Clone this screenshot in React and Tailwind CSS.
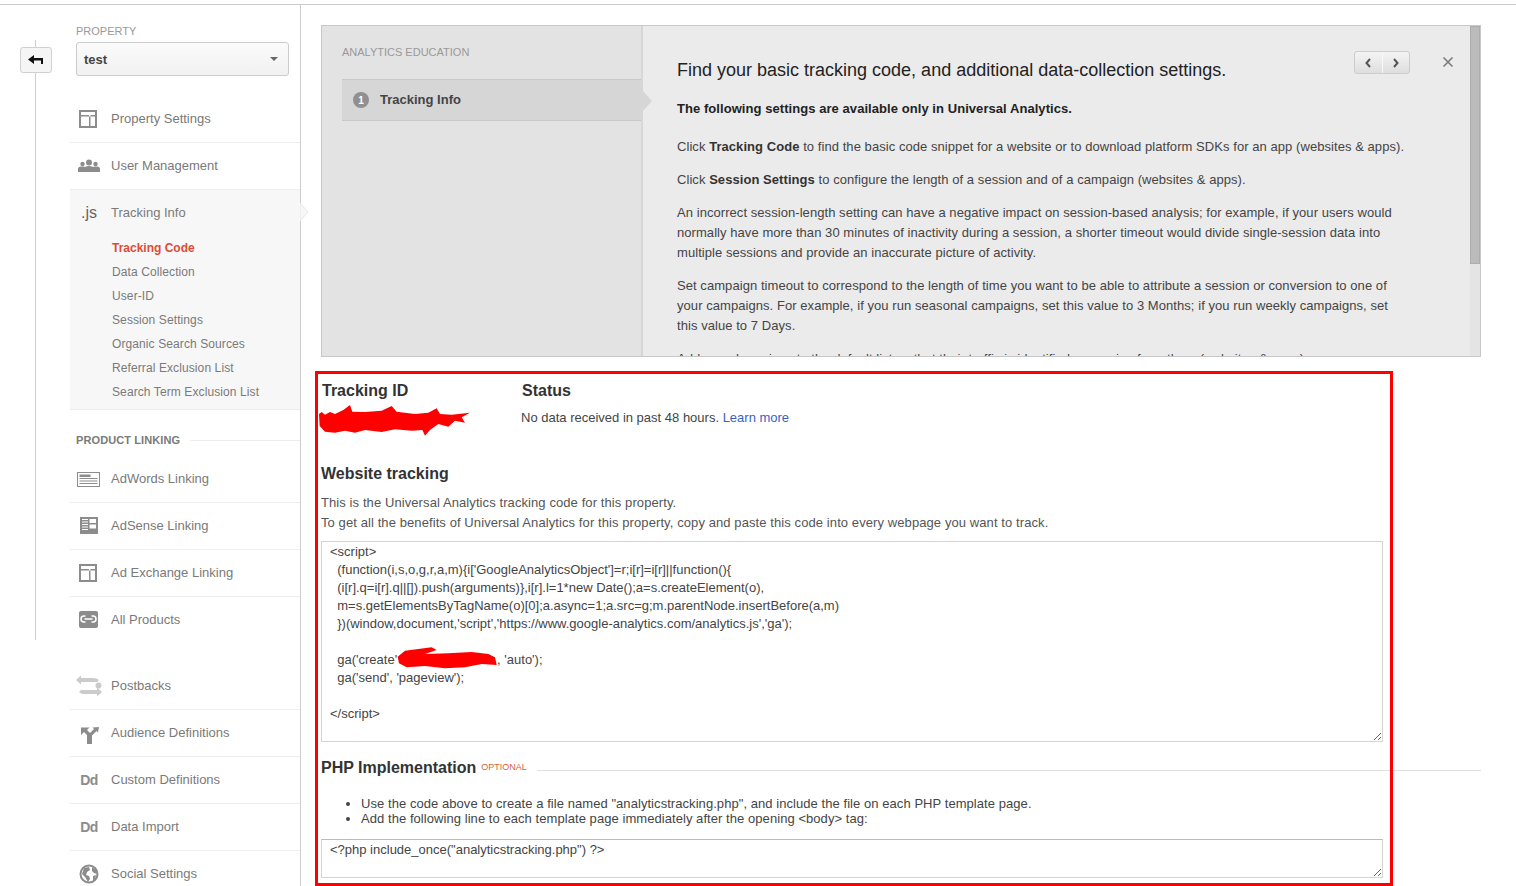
const Ic = ({ children }) => (
  <svg width="28" height="24" viewBox="0 0 28 24" className="shrink-0" fill="#8c8c8c">{children}</svg>
);

const PanelIcon = () => (
  <Ic>
    <path fillRule="evenodd" d="M4 3h18v18H4zM6 5v14h14V5zM6 8h14v1.500H6zM14 8h1.500v11H14z" />
  </Ic>
);

const UsersIcon = () => (
  <Ic>
    <circle cx="14" cy="8.500" r="3" />
    <circle cx="7.500" cy="10" r="2.200" />
    <circle cx="20.500" cy="10" r="2.200" />
    <path d="M3 18v-3q0-2.500 3-2.500h2.500q1 0 1.500.5 1.500-1 4-1t4 1q.5-.5 1.500-.5H22q3 0 3 2.500v3z" />
  </Ic>
);

const AdWordsIcon = () => (
  <Ic>
    <path fillRule="evenodd" d="M2 5h23v15H2zM3 6v13h21V6z" />
    <path d="M4.500 7.500h11v2.500h-11zM4.500 11h18v1h-18zM4.500 13.500h18v1h-18zM4.500 16h18v1h-18z" />
  </Ic>
);

const AdSenseIcon = () => (
  <Ic>
    <path fillRule="evenodd" d="M5 3h18v17H5zM7 5v1h6V5zM7 7.500v1h6v-1zM7 10v1h6v-1zM7 12.500v1h6v-1zM7 15v1h6v-1zM14.500 5v4h6.500V5zM14.500 10.500v4h6.500v-4z" />
  </Ic>
);

const LinkIcon = () => (
  <Ic>
    <rect x="4" y="3" width="19" height="17" rx="2" />
    <path d="M10.500 8H9a3 3 0 0 0 0 6h1.500M16.500 8H18a3 3 0 0 1 0 6h-1.500M9.500 11h8" stroke="#fff" strokeWidth="1.500" fill="none" />
  </Ic>
);

const PostbackIcon = () => (
  <Ic>
    <path fill="#cbcbcb" d="M1 6l5-4.500V4h12q4 0 6 2-2 1-2 3.500V8H6v2.500zM27 18l-5 4.500V20H8q-2 0-4-2 2-1 2-3v1h16v-2.500z" />
    <circle cx="23.500" cy="11.500" r="3" fill="#cbcbcb" />
  </Ic>
);

const AudienceIcon = () => (
  <Ic>
    <path d="M6 6.500h8.500L12 9l3 3 4-4-1.500-1.500L24 6l-1 5.500-1.500-1.500L17 14.500V23h-5v-9L9 11l-3 3z" />
  </Ic>
);

const GlobeIcon = () => (
  <Ic>
    <circle cx="14" cy="12" r="8.500" fill="none" stroke="#8c8c8c" strokeWidth="2" />
    <path d="M9 6l5-1 1 3-3 2-1 3 3 1 1 3-2 3-3-5-3-3zM17 5l4 3 1 4-3-1-2-2zM18 14l3-1-1 5-2 1z" />
  </Ic>
);

const DdIcon = () => (
  <span className="w-[28px] shrink-0 text-center text-[14px] font-bold leading-none tracking-[-0.5px] text-[#8c8c8c]">Dd</span>
);

const NavRow = ({ icon, label, last }) => (
  <div className={`flex h-[47px] items-center border-b pl-[5px] ${last ? 'border-transparent' : 'border-[#eeeeee]'}`}>
    {icon}
    <span className="ml-[8px] text-[13px] text-[#7a7a7a]">{label}</span>
  </div>
);

const subItems = ['Data Collection', 'User-ID', 'Session Settings', 'Organic Search Sources', 'Referral Exclusion List', 'Search Term Exclusion List'];

const Sidebar = () => (
  <div className="relative h-full w-[301px] shrink-0 border-r border-[#cccccc] pl-[70px]">
    {/* rail and back button */}
    <div className="absolute left-[35px] top-[35px] h-[600px] w-px bg-[#cccccc]" />
    <button className="absolute left-[20px] top-[42px] flex h-[26px] w-[32px] items-center justify-center rounded-[3px] border border-[#d0d0d0] bg-[#f5f5f5]">
      <svg width="16" height="12" viewBox="0 0 16 12">
        <path d="M0 5.500L6 1v3h9v6h-2V6.500H6V10z" fill="#111" />
      </svg>
    </button>

    <div className="pl-[6px] pr-[11px] pt-[20px]">
      <div className="text-[11px] leading-[13px] text-[#999]">PROPERTY</div>
      <div className="mt-[4px] flex h-[34px] items-center justify-between rounded-[3px] border border-[#cccccc] bg-gradient-to-b from-[#fbfbfb] to-[#f1f1f1] pl-[7px] pr-[10px]">
        <span className="pt-[2px] text-[13px] font-bold text-[#444]">test</span>
        <span className="h-0 w-0 border-x-[4px] border-t-[4px] border-x-transparent border-t-[#666]" />
      </div>
    </div>

    <div className="mt-[20px]">
      <NavRow icon={<PanelIcon />} label="Property Settings" />
      <NavRow icon={<UsersIcon />} label="User Management" />
      <div className="relative border-b border-[#eeeeee] bg-[#f7f7f7] pb-[5px]">
        <div className="flex h-[46px] items-center pl-[5px]">
          <span className="w-[28px] shrink-0 text-center text-[16px] leading-none text-[#666]">.js</span>
          <span className="ml-[8px] text-[13px] text-[#7a7a7a]">Tracking Info</span>
        </div>
        <div className="pl-[42px] text-[12px] leading-[24px] tracking-[0.1px] text-[#7a7a7a]">
          <div className="font-bold tracking-normal text-[#dd4b39]">Tracking Code</div>
          {subItems.map((item) => (
            <div key={item}>{item}</div>
          ))}
        </div>
        <svg width="9" height="18" viewBox="0 0 9 18" className="absolute left-[230px] top-[13px]">
          <path d="M0 0l8 9-8 9z" fill="#f7f7f7" stroke="#e6e6e6" />
        </svg>
      </div>

      <div className="mt-[23px] flex h-[14px] items-center pl-[6px]">
        <span className="text-[11px] font-bold tracking-[0.1px] text-[#7a7a7a]">PRODUCT LINKING</span>
        <span className="ml-[10px] h-px flex-1 bg-[#eeeeee]" />
      </div>
      <div className="mt-[9px]">
        <NavRow icon={<AdWordsIcon />} label="AdWords Linking" />
        <NavRow icon={<AdSenseIcon />} label="AdSense Linking" />
        <NavRow icon={<PanelIcon />} label="Ad Exchange Linking" />
        <NavRow icon={<LinkIcon />} label="All Products" last />
      </div>
      <div className="mt-[19px]">
        <NavRow icon={<PostbackIcon />} label="Postbacks" />
        <NavRow icon={<AudienceIcon />} label="Audience Definitions" />
        <NavRow icon={<DdIcon />} label="Custom Definitions" />
        <NavRow icon={<DdIcon />} label="Data Import" />
        <NavRow icon={<GlobeIcon />} label="Social Settings" last />
      </div>
    </div>
  </div>
);

const Education = () => (
  <div className="ml-[20px] flex h-[332px] w-[1160px] overflow-hidden border border-[#c8c8c8] bg-[#ebebeb]">
    <div className="relative w-[321px] shrink-0 border-r-2 border-[#d6d6d6] bg-[#e3e3e3] pl-[20px]">
      <div className="pt-[20px] text-[11px] leading-[13px] text-[#999]">ANALYTICS EDUCATION</div>
      <div className="mt-[20px] flex h-[42px] items-center border-y border-[#c8c8c8] bg-[#d6d6d6] pl-[11px]">
        <span className="flex h-[16px] w-[16px] items-center justify-center rounded-full bg-[#909090] text-[10px] font-bold text-white">1</span>
        <span className="ml-[11px] text-[13px] font-bold text-[#444]">Tracking Info</span>
      </div>
    </div>
    <div className="relative -ml-px flex-1">
      <svg width="10" height="22" viewBox="0 0 10 22" className="absolute left-0 top-[64px]">
        <path d="M0 0l10 11-10 11z" fill="#d6d6d6" />
      </svg>
      <div className="w-[762px] pl-[35px] text-[13px] leading-[20px] tracking-[0.06px] text-[#444]">
        <h2 className="pt-[33px] text-[18px] leading-[22px] tracking-normal text-[#222]">Find your basic tracking code, and additional data-collection settings.</h2>
        <p className="mt-[18px] font-bold text-[#222]">The following settings are available only in Universal Analytics.</p>
        <p className="mt-[18px] whitespace-nowrap">Click <b className="text-[#333]">Tracking Code</b> to find the basic code snippet for a website or to download platform SDKs for an app (websites &amp; apps).</p>
        <p className="mt-[13px]">Click <b className="text-[#333]">Session Settings</b> to configure the length of a session and of a campaign (websites &amp; apps).</p>
        <p className="mt-[13px]">An incorrect session-length setting can have a negative impact on session-based analysis; for example, if your users would normally have more than 30 minutes of inactivity during a session, a shorter timeout would divide single-session data into multiple sessions and provide an inaccurate picture of activity.</p>
        <p className="mt-[13px]">Set campaign timeout to correspond to the length of time you want to be able to attribute a session or conversion to one of your campaigns. For example, if you run seasonal campaigns, set this value to 3 Months; if you run weekly campaigns, set this value to 7 Days.</p>
        <p className="mt-[13px]">Add search engines to the default list so that their traffic is identified as coming from them (websites &amp; apps).</p>
      </div>
      <div className="absolute right-[70px] top-[25px] flex h-[23px] w-[56px] rounded-[3px] border border-[#cccccc] bg-gradient-to-b from-[#f4f4f4] to-[#dedede]">
        <span className="flex flex-1 items-center justify-center border-r border-[#f8f8f8]">
          <svg width="8" height="10" viewBox="0 0 8 10"><path d="M6 1L2.500 5 6 9" fill="none" stroke="#555" strokeWidth="2" /></svg>
        </span>
        <span className="flex flex-1 items-center justify-center">
          <svg width="8" height="10" viewBox="0 0 8 10"><path d="M2 1l3.500 4L2 9" fill="none" stroke="#555" strokeWidth="2" /></svg>
        </span>
      </div>
      <svg width="10" height="10" viewBox="0 0 10 10" className="absolute right-[27px] top-[31px]">
        <path d="M0.500 0.500l9 9M9.500 0.500l-9 9" stroke="#777" strokeWidth="1.500" />
      </svg>
      <div className="absolute bottom-0 right-0 top-0 w-[10px] bg-[#e4e4e4]">
        <div className="h-[238px] w-full border border-[#adadad] bg-[#bbbbbb]" />
      </div>
    </div>
  </div>
);

const codeTop = [
  '<script>',
  "  (function(i,s,o,g,r,a,m){i['GoogleAnalyticsObject']=r;i[r]=i[r]||function(){",
  '  (i[r].q=i[r].q||[]).push(arguments)},i[r].l=1*new Date();a=s.createElement(o),',
  '  m=s.getElementsByTagName(o)[0];a.async=1;a.src=g;m.parentNode.insertBefore(a,m)',
  "  })(window,document,'script','https://www.google-analytics.com/analytics.js','ga');",
];

const Tracking = () => (
  <div className="relative ml-[20px] w-[1160px]">
    <div className="flex pl-px pt-[24px]">
      <div className="w-[200px] text-[16px] font-bold leading-[20px] text-[#333]">Tracking ID</div>
      <div className="text-[16px] font-bold leading-[20px] text-[#333]">Status</div>
    </div>
    <div className="ml-[200px] mt-[7px] text-[13px] leading-[20px] text-[#444]">
      No data received in past 48 hours. <span className="text-[#3b5fc4]">Learn more</span>
    </div>
    <h3 className="mt-[36px] text-[16px] font-bold leading-[20px] text-[#333]">Website tracking</h3>
    <p className="mt-[9px] text-[13px] leading-[20px] tracking-[0.09px] text-[#555]">This is the Universal Analytics tracking code for this property.<br />To get all the benefits of Universal Analytics for this property, copy and paste this code into every webpage you want to track.</p>
    <div className="mt-[8px] h-[201px] w-[1062px] resize overflow-auto whitespace-pre border border-[#d4d4d4] pl-[8px] pt-px text-[13px] leading-[18px] text-[#444]">
      {codeTop.map((line) => (
        <div key={line}>{line}</div>
      ))}
      <div>&nbsp;</div>
      <div className="flex">
        <span>{"  ga('create'"}</span>
        <span className="ml-[100px]">, 'auto');</span>
      </div>
      <div>{"  ga('send', 'pageview');"}</div>
      <div>&nbsp;</div>
      <div>{'</script>'}</div>
    </div>
    <div className="mt-[16px] flex items-center">
      <h3 className="text-[16px] font-bold leading-[20px] text-[#333]">PHP Implementation</h3>
      <span className="ml-[5px] text-[9px] text-[#d9603f]">OPTIONAL</span>
      <span className="ml-[10px] mt-[4px] h-px flex-1 bg-[#e0e0e0]" />
    </div>
    <ul className="ml-[40px] mt-[18px] list-disc text-[13px] leading-[15px] tracking-[0.06px] text-[#444]">
      <li>Use the code above to create a file named "analyticstracking.php", and include the file on each PHP template page.</li>
      <li>Add the following line to each template page immediately after the opening &lt;body&gt; tag:</li>
    </ul>
    <div className="mt-[13px] h-[39px] w-[1062px] resize overflow-auto border border-[#d4d4d4] border-t-[#bbbbbb] pl-[8px] pt-px text-[13px] leading-[18px] text-[#444]">&lt;?php include_once("analyticstracking.php") ?&gt;</div>
  </div>
);

export default function App() {
  return (
    <div className="relative h-[886px] w-[1516px] overflow-hidden bg-white font-['Liberation_Sans',Arial,sans-serif]">
      <div className="h-[4px]" />
      <div className="flex h-[882px] border-t border-[#cccccc]">
        <Sidebar />
        <div className="flex-1 pt-[20px]">
          <Education />
          <Tracking />
        </div>
      </div>
      {/* red annotation painted on top of the page */}
      <div className="pointer-events-none absolute left-[315px] top-[371px] h-[515px] w-[1078px] border-[3px] border-[#ff0000]" />
      <svg width="160" height="45" viewBox="0 0 480 135" className="absolute left-[315px] top-[400px]">
        <path fill="#ff0000" d="M12 42L20 36 30 44 45 36 60 42 85 30 105 15 112 35 150 36 200 32 230 18 245 35 300 42 340 38 365 25 375 42 410 44 465 38 440 52 450 68 420 62 400 80 370 72 345 90 330 107 322 90 290 92 240 88 200 96 150 90 120 98 90 92 60 98 30 95 14 78z" />
      </svg>
      <svg width="300" height="50" viewBox="0 0 900 150" className="absolute left-[315px] top-[630px]">
        <path fill="#ff0000" d="M248 80L270 62 350 52 365 60 330 72 400 70 470 66 520 72 540 82 545 105 500 102 450 112 390 115 330 108 275 112 252 100z" />
      </svg>
    </div>
  );
}
